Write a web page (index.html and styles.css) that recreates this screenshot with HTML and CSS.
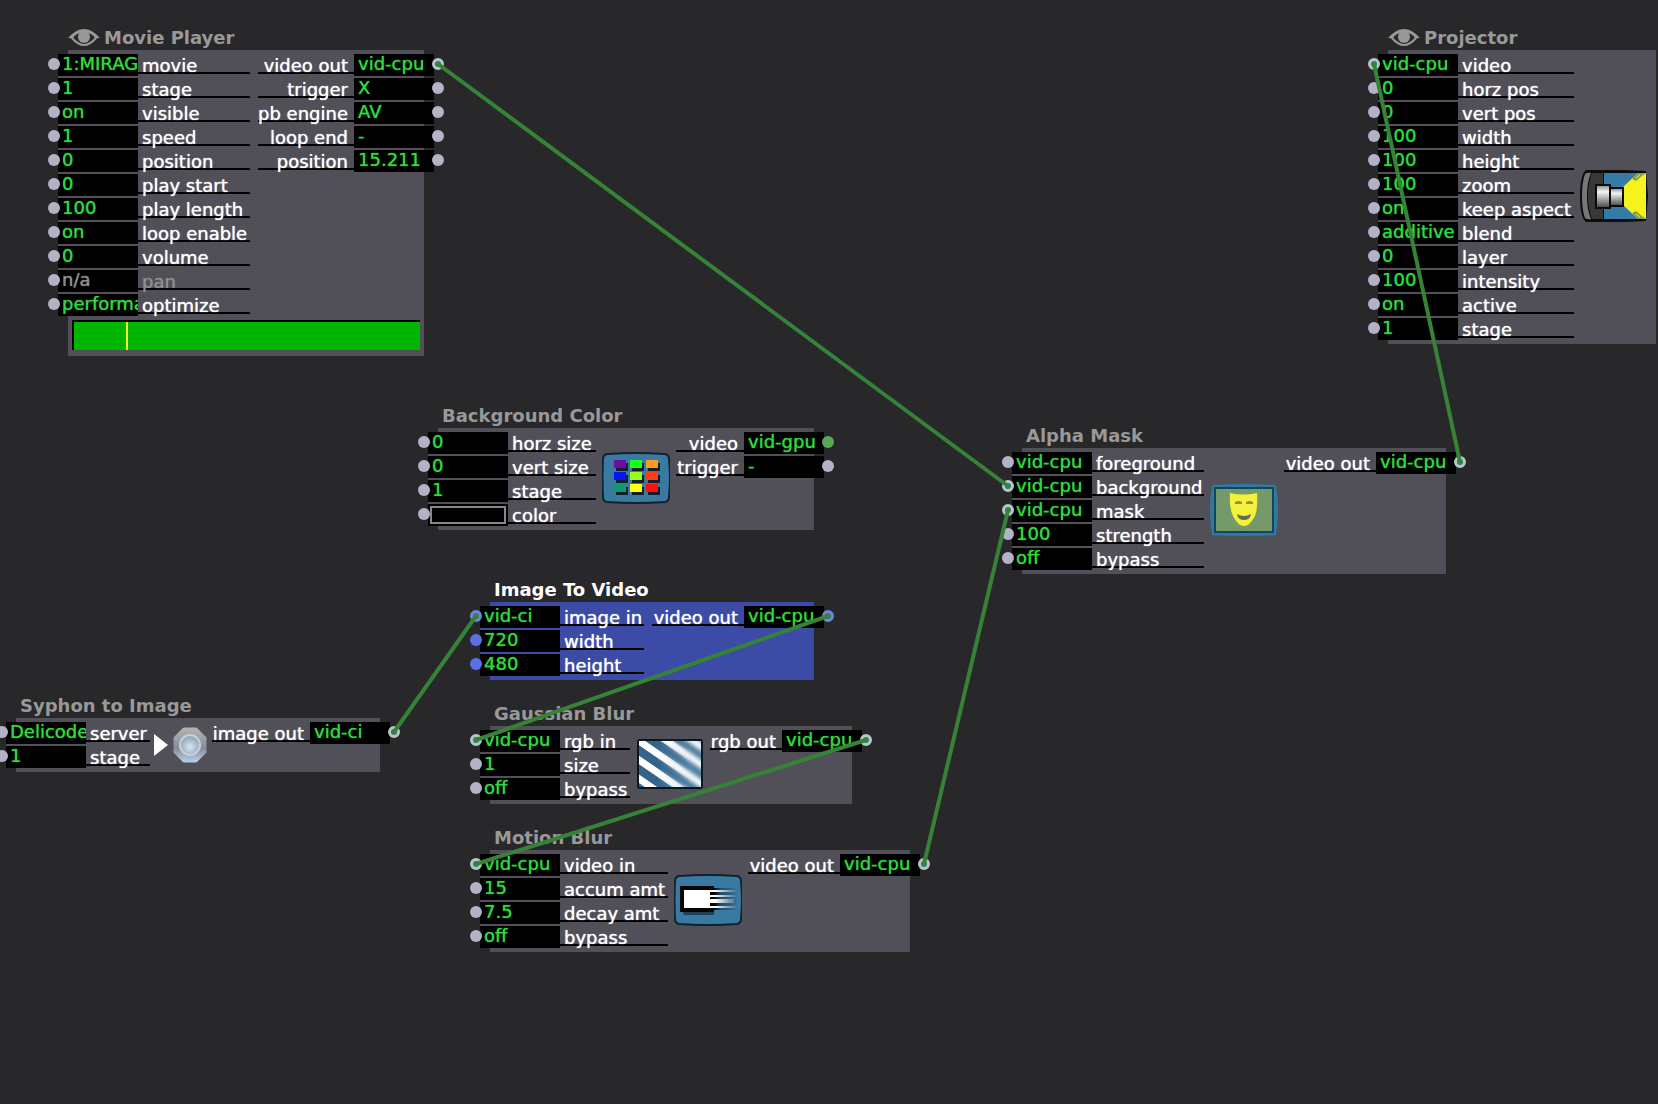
FILE: index.html
```html
<!DOCTYPE html>
<html lang="en">
<head>
<meta charset="utf-8">
<title>Scene Editor</title>
<meta name="viewport" content="width=device-width, initial-scale=1">
<link rel="stylesheet" href="styles.css">
</head>
<body>
<main class="canvas">

  <section class="node movie-player">
    <h2 class="title"><svg class="eye" viewBox="0 0 32 20" aria-hidden="true"><path d="M2 10Q16-3 30 10M4 10Q16 24 28 10" fill="none" stroke="currentColor" stroke-width="2"/><path d="M0 10Q8 1 16 1Q24 1 32 10L27 10Q24 5 20 4L12 4Q8 5 5 10Z" fill="currentColor"/><circle cx="16" cy="9" r="6" fill="currentColor"/></svg>Movie Player</h2>
    <div class="body">
      <div class="ports">
        <div class="inputs">
          <label class="port"><i class="dot"></i><input value="1:MIRAGE"><span class="name">movie</span></label>
          <label class="port"><i class="dot"></i><input value="1"><span class="name">stage</span></label>
          <label class="port"><i class="dot"></i><input value="on"><span class="name">visible</span></label>
          <label class="port"><i class="dot"></i><input value="1"><span class="name">speed</span></label>
          <label class="port"><i class="dot"></i><input value="0"><span class="name">position</span></label>
          <label class="port"><i class="dot"></i><input value="0"><span class="name">play start</span></label>
          <label class="port"><i class="dot"></i><input value="100"><span class="name">play length</span></label>
          <label class="port"><i class="dot"></i><input value="on"><span class="name">loop enable</span></label>
          <label class="port"><i class="dot"></i><input value="0"><span class="name">volume</span></label>
          <label class="port off"><i class="dot"></i><input value="n/a" disabled><span class="name">pan</span></label>
          <label class="port"><i class="dot"></i><input value="performance"><span class="name">optimize</span></label>
        </div>
        <div class="outputs">
          <div class="port"><span class="name">video out</span><output>vid-cpu</output><i class="dot linked"></i></div>
          <div class="port"><span class="name">trigger</span><output>X</output><i class="dot"></i></div>
          <div class="port"><span class="name">pb engine</span><output>AV</output><i class="dot"></i></div>
          <div class="port"><span class="name">loop end</span><output>-</output><i class="dot"></i></div>
          <div class="port"><span class="name">position</span><output>15.211</output><i class="dot"></i></div>
        </div>
      </div>
      <div class="timeline"><div class="playhead" style="width: 15.5%"></div></div>
    </div>
  </section>

  <section class="node projector">
    <h2 class="title"><svg class="eye" viewBox="0 0 32 20" aria-hidden="true"><path d="M2 10Q16-3 30 10M4 10Q16 24 28 10" fill="none" stroke="currentColor" stroke-width="2"/><path d="M0 10Q8 1 16 1Q24 1 32 10L27 10Q24 5 20 4L12 4Q8 5 5 10Z" fill="currentColor"/><circle cx="16" cy="9" r="6" fill="currentColor"/></svg>Projector</h2>
    <div class="body">
      <div class="ports">
        <div class="inputs">
          <label class="port"><i class="dot linked"></i><input value="vid-cpu"><span class="name">video</span></label>
          <label class="port"><i class="dot"></i><input value="0"><span class="name">horz pos</span></label>
          <label class="port"><i class="dot"></i><input value="0"><span class="name">vert pos</span></label>
          <label class="port"><i class="dot"></i><input value="100"><span class="name">width</span></label>
          <label class="port"><i class="dot"></i><input value="100"><span class="name">height</span></label>
          <label class="port"><i class="dot"></i><input value="100"><span class="name">zoom</span></label>
          <label class="port"><i class="dot"></i><input value="on"><span class="name">keep aspect</span></label>
          <label class="port"><i class="dot"></i><input value="additive"><span class="name">blend</span></label>
          <label class="port"><i class="dot"></i><input value="0"><span class="name">layer</span></label>
          <label class="port"><i class="dot"></i><input value="100"><span class="name">intensity</span></label>
          <label class="port"><i class="dot"></i><input value="on"><span class="name">active</span></label>
          <label class="port"><i class="dot"></i><input value="1"><span class="name">stage</span></label>
        </div>
        <svg class="icon" viewBox="0 0 68 52" aria-hidden="true">
          <defs><linearGradient id="metal" x1="0" y1="0" x2="0" y2="1"><stop offset="0" stop-color="#888"/><stop offset=".3" stop-color="#f4f4f4"/><stop offset="1" stop-color="#444"/></linearGradient></defs>
          <path d="M6 0Q34-1 66 1L68 26L66 51Q34 53 6 52Q0 47 0 26Q0 5 6 0Z" fill="#0c0c0c"/>
          <path d="M24 3H65V49H24Z" fill="#357ba8"/>
          <path d="M43 17L58 3H66V49H58L43 35Z" fill="#f6f21e"/>
          <path d="M52 9L58 3H66L56 11ZM52 43L58 49H66L56 41Z" fill="#8d9c50"/>
          <path d="M56 8L60 5M59 9L64 5M56 44L60 47M59 43L64 47" stroke="#f6f21e" stroke-width="1"/>
          <path d="M5 4Q8 2 11 3Q7 12 7 26Q7 40 11 49Q8 50 5 48Q2 40 2 26Q2 12 5 4Z" fill="#777"/>
          <path d="M12 3H23V14H16V38H23V49H12Q8 40 8 26Q8 12 12 3Z" fill="#383838"/>
          <path d="M16 15H30V38H16Z" fill="url(#metal)" stroke="#0c0c0c" stroke-width="2"/>
          <path d="M30 18H43V36H30Z" fill="url(#metal)" stroke="#0c0c0c" stroke-width="2"/>
        </svg>
      </div>
    </div>
  </section>

  <section class="node background-color">
    <h2 class="title">Background Color</h2>
    <div class="body">
      <div class="ports">
        <div class="inputs">
          <label class="port"><i class="dot"></i><input value="0"><span class="name">horz size</span></label>
          <label class="port"><i class="dot"></i><input value="0"><span class="name">vert size</span></label>
          <label class="port"><i class="dot"></i><input value="1"><span class="name">stage</span></label>
          <label class="port"><i class="dot"></i><input type="color" value="#000000"><span class="name">color</span></label>
        </div>
        <svg class="icon" viewBox="0 0 68 52" aria-hidden="true">
          <path d="M5 2Q34 0 63 2Q67 3 67 7Q69 26 67 45Q67 49 63 50Q34 52 5 50Q1 49 1 45Q0 26 1 7Q1 3 5 2Z" fill="#3a7aa2" stroke="#12222e" stroke-width="2"/>
          <path d="M14 11h12v8H14zM30 11h12v8H30zM46 11h12v8H46zM14 23h12v8H14zM30 23h12v8H30zM46 23h12v8H46zM14 35h12v8H14zM30 35h12v8H30zM46 35h12v8H46z" fill="#10202c"/>
          <path d="M12 8h12v8H12z" fill="#6a0fa0"/><path d="M28 8h12v8H28z" fill="#1cff1c"/><path d="M44 8h12v8H44z" fill="#ff9a1c"/>
          <path d="M12 20h12v8H12z" fill="#0a14f0"/><path d="M28 20h12v8H28z" fill="#96ff1e"/><path d="M44 20h12v8H44z" fill="#ff3c1c"/>
          <path d="M12 32h12v8H12z" fill="#109a70"/><path d="M28 32h12v8H28z" fill="#ffff10"/><path d="M44 32h12v8H44z" fill="#ff1010"/>
        </svg>
        <div class="outputs">
          <div class="port"><span class="name">video</span><output>vid-gpu</output><i class="dot gpu"></i></div>
          <div class="port"><span class="name">trigger</span><output>-</output><i class="dot"></i></div>
        </div>
      </div>
    </div>
  </section>

  <section class="node alpha-mask">
    <h2 class="title">Alpha Mask</h2>
    <div class="body">
      <div class="ports">
        <div class="inputs">
          <label class="port"><i class="dot"></i><input value="vid-cpu"><span class="name">foreground</span></label>
          <label class="port"><i class="dot linked"></i><input value="vid-cpu"><span class="name">background</span></label>
          <label class="port"><i class="dot linked"></i><input value="vid-cpu"><span class="name">mask</span></label>
          <label class="port"><i class="dot"></i><input value="100"><span class="name">strength</span></label>
          <label class="port"><i class="dot"></i><input value="off"><span class="name">bypass</span></label>
        </div>
        <svg class="icon" viewBox="0 0 68 52" aria-hidden="true">
          <path d="M2 1Q34-1 66 1Q70 26 66 51Q34 53 2 51Q-2 26 2 1Z" fill="#33789f"/>
          <path d="M5 4H63V48H5Z" fill="#739a68" stroke="#12455f" stroke-width="2"/>
          <path d="M20 9Q33 12 47 9Q48 25 45 32Q40 42 34 42Q28 42 23 32Q19 24 20 9Z" fill="#f5f03a"/>
          <path d="M25 18Q28 16 32 18V20H25ZM36 18Q40 16 43 18V20H36Z" fill="#8a9440"/>
          <path d="M27 30Q34 34 41 30Q40 36 34 36Q28 36 27 30Z" fill="#5f6b52"/>
        </svg>
        <div class="outputs">
          <div class="port"><span class="name">video out</span><output>vid-cpu</output><i class="dot linked"></i></div>
        </div>
      </div>
    </div>
  </section>

  <section class="node image-to-video selected">
    <h2 class="title">Image To Video</h2>
    <div class="body">
      <div class="ports">
        <div class="inputs">
          <label class="port"><i class="dot linked"></i><input value="vid-ci"><span class="name">image in</span></label>
          <label class="port"><i class="dot"></i><input value="720"><span class="name">width</span></label>
          <label class="port"><i class="dot"></i><input value="480"><span class="name">height</span></label>
        </div>
        <div class="outputs">
          <div class="port"><span class="name">video out</span><output>vid-cpu</output><i class="dot linked"></i></div>
        </div>
      </div>
    </div>
  </section>

  <section class="node syphon">
    <h2 class="title">Syphon to Image</h2>
    <div class="body">
      <div class="ports">
        <div class="inputs">
          <label class="port"><i class="dot"></i><input value="Delicode"><span class="name">server</span></label>
          <label class="port"><i class="dot"></i><input value="1"><span class="name">stage</span></label>
        </div>
        <svg class="icon" viewBox="0 0 62 46" aria-hidden="true">
          <defs><linearGradient id="ring" x1="0" y1="0" x2="0" y2="1"><stop offset="0" stop-color="#b4b2b0"/><stop offset=".6" stop-color="#858c96"/><stop offset="1" stop-color="#b4cbe2"/></linearGradient><radialGradient id="lens" cx=".5" cy=".6" r=".6"><stop offset="0" stop-color="#d8e6f4"/><stop offset="1" stop-color="#8da3b8"/></radialGradient></defs>
          <path d="M4 12L18 23L4 34Z" fill="#fff"/>
          <path d="M34 7H46L55 16V30L46 39H34L25 30V16Z" fill="url(#ring)" stroke="url(#ring)" stroke-width="3" stroke-linejoin="round"/>
          <circle cx="40" cy="23" r="11" fill="#c9ced4"/>
          <circle cx="40" cy="23" r="9" fill="url(#lens)"/>
        </svg>
        <div class="outputs">
          <div class="port"><span class="name">image out</span><output>vid-ci</output><i class="dot linked"></i></div>
        </div>
      </div>
    </div>
  </section>

  <section class="node gaussian-blur">
    <h2 class="title">Gaussian Blur</h2>
    <div class="body">
      <div class="ports">
        <div class="inputs">
          <label class="port"><i class="dot linked"></i><input value="vid-cpu"><span class="name">rgb in</span></label>
          <label class="port"><i class="dot"></i><input value="1"><span class="name">size</span></label>
          <label class="port"><i class="dot"></i><input value="off"><span class="name">bypass</span></label>
        </div>
        <svg class="icon" viewBox="0 0 68 52" aria-hidden="true">
          <defs>
            <clipPath id="pane"><rect x="3" y="3" width="62" height="46"/></clipPath>
            <filter id="soft"><feGaussianBlur stdDeviation="2"/></filter>
            <linearGradient id="fade"><stop offset=".3" stop-color="#fff" stop-opacity="0"/><stop offset=".8" stop-color="#fff"/></linearGradient>
            <mask id="right"><rect width="68" height="52" fill="url(#fade)"/></mask>
          </defs>
          <rect x="1" y="1" width="66" height="50" rx="3" fill="#0c1820"/>
          <g clip-path="url(#pane)">
            <rect x="3" y="3" width="62" height="46" fill="#33648a"/>
            <path id="stripes" d="M-10 32L40 66M-10 13L60 61M-10-6L70 49M12-10L82 38M38-10L94 28" stroke="#fff" stroke-width="7"/>
            <g mask="url(#right)"><rect x="3" y="3" width="62" height="46" fill="#4d7da0"/><use href="#stripes" filter="url(#soft)"/></g>
          </g>
        </svg>
        <div class="outputs">
          <div class="port"><span class="name">rgb out</span><output>vid-cpu</output><i class="dot linked"></i></div>
        </div>
      </div>
    </div>
  </section>

  <section class="node motion-blur">
    <h2 class="title">Motion Blur</h2>
    <div class="body">
      <div class="ports">
        <div class="inputs">
          <label class="port"><i class="dot linked"></i><input value="vid-cpu"><span class="name">video in</span></label>
          <label class="port"><i class="dot"></i><input value="15"><span class="name">accum amt</span></label>
          <label class="port"><i class="dot"></i><input value="7.5"><span class="name">decay amt</span></label>
          <label class="port"><i class="dot"></i><input value="off"><span class="name">bypass</span></label>
        </div>
        <svg class="icon" viewBox="0 0 68 52" aria-hidden="true">
          <defs><linearGradient id="trail" gradientUnits="userSpaceOnUse" x1="36" x2="64" y1="0" y2="0"><stop offset=".2" stop-color="#fff"/><stop offset="1" stop-color="#fff" stop-opacity="0"/></linearGradient><linearGradient id="shade"><stop offset="0" stop-color="#000"/><stop offset=".3" stop-color="#123" stop-opacity=".5"/><stop offset="1" stop-color="#000" stop-opacity="0"/></linearGradient></defs>
          <path d="M5 2Q34 0 63 2Q67 3 67 7Q69 26 67 45Q67 49 63 50Q34 52 5 50Q1 49 1 45Q0 26 1 7Q1 3 5 2Z" fill="#3a7aa2" stroke="#12222e" stroke-width="2"/>
          <path d="M8 36H40V41H10Z" fill="#1d4258"/>
          <path d="M6 12H40V38H6Z" fill="#060604"/>
          <path d="M40 14H64V36H40Z" fill="url(#shade)"/>
          <path d="M10 16H36V34H10Z" fill="#fff"/>
          <path d="M36 16H64V18H36ZM36 21H64V23H36ZM36 25H60V29H36ZM36 32H64V34H36Z" fill="url(#trail)"/>
        </svg>
        <div class="outputs">
          <div class="port"><span class="name">video out</span><output>vid-cpu</output><i class="dot linked"></i></div>
        </div>
      </div>
    </div>
  </section>

  <svg class="wires" aria-hidden="true">
    <path d="M438 64L1008 486"/>
    <path d="M1460 462L1374 64"/>
    <path d="M924 864L1008 510"/>
    <path d="M394 732L476 616"/>
    <path d="M828 616L476 740"/>
    <path d="M866 740L476 864"/>
  </svg>
</main>
</body>
</html>
```
FILE: styles.css
```css
* {
  box-sizing: border-box;
}

body {
  margin: 0;
  background: #28282a;
  color: #fff;
  font: 18px/24px "DejaVu Sans", Verdana, sans-serif;
}

.canvas {
  position: relative;
  min-height: 100vh;
  overflow: hidden;
}

/* Nodes sit freely on the canvas */
.node {
  position: absolute;
  --fill: #515059;
  --dot: #b4b2c6;
  --ring: #b4c8c8;
}

.movie-player { left: 68px; top: 26px; --in: 112px; --out: 96px; }
.projector { left: 1388px; top: 26px; --in: 116px; }
.background-color { left: 438px; top: 404px; --in: 88px; --out: 68px; }
.alpha-mask { left: 1022px; top: 424px; --in: 112px; --out: 92px; }
.image-to-video { left: 490px; top: 578px; --in: 84px; --out: 92px; }
.syphon { left: 16px; top: 694px; --in: 64px; --out: 98px; }
.gaussian-blur { left: 490px; top: 702px; --in: 70px; --out: 72px; }
.motion-blur { left: 490px; top: 826px; --in: 108px; --out: 92px; }

.title {
  display: flex;
  align-items: center;
  gap: 4px;
  margin: 0;
  padding-left: 4px;
  color: #999;
  font-size: 18px;
  line-height: 24px;
  white-space: nowrap;
}

.eye {
  width: 32px;
  height: 20px;
  margin-left: -4px;
}

.body {
  padding: 4px 0;
  background: var(--fill);
}

.selected {
  --fill: #3b4ba6;
  --dot: #5c70e4;
  --ring: #6c88d8;
}

.selected .title { color: #fff; }

.ports {
  display: flex;
}

.inputs,
.outputs {
  display: flex;
  flex-direction: column;
  gap: 2px;
}

.inputs { margin-left: -20px; }
.outputs { margin-right: -20px; }

.movie-player .ports,
.image-to-video .ports { gap: 8px; }

.port {
  display: flex;
  height: 22px;
}

.dot {
  position: relative;
  flex: none;
  width: 12px;
  height: 12px;
  margin-top: 4px;
  border-radius: 50%;
  background: var(--dot);
}

.inputs .dot { margin-right: -2px; }
.outputs .dot { margin-left: -2px; }

.dot.linked {
  border: 3px solid var(--ring);
  background: #3f7a5c;
}

.dot.gpu { background: #57a957; }

input,
output {
  flex: none;
  width: 80px;
  height: 22px;
  margin: 0;
  padding: 0 0 2px 4px;
  border: 0;
  border-radius: 0;
  background: #000;
  color: #2bdc3a;
  font: inherit;
  line-height: 20px;
  text-shadow: 0 0 1px currentColor;
  overflow: hidden;
}

input { padding-bottom: 4px; }

/* Divider between value boxes, also where they stick out of the body */
.inputs .port:not(:last-child) input {
  box-shadow: 0 2px 0 var(--fill);
}

input:focus { outline: none; }

input[type="color"] {
  appearance: none;
  padding: 2px;
}

input[type="color"]::-webkit-color-swatch-wrapper { padding: 0; }

input[type="color"]::-webkit-color-swatch {
  border: 2px solid #888;
  border-radius: 0;
}

.name {
  height: 20px;
  border-bottom: 2px solid #000;
  text-shadow: 0 0 1px currentColor;
  white-space: nowrap;
}

.inputs .name {
  width: var(--in);
  padding-left: 4px;
}

.outputs .name {
  width: var(--out);
  padding-right: 6px;
  text-align: right;
}

.off input,
.off .name { color: #8f8f8f; }

.icon {
  flex: none;
  align-self: center;
  width: 68px;
  height: 52px;
  margin: 0 6px 2px;
}

.projector .icon { margin-right: 8px; }

.syphon .icon {
  width: 62px;
  height: 46px;
  margin: 0;
}

.timeline {
  height: 30px;
  margin: 4px 4px 2px;
  border: solid #000;
  border-width: 2px 0 0 2px;
  background: #00b400;
}

.playhead {
  height: 100%;
  border-right: 2px solid #f5f51e;
}

.wires {
  position: absolute;
  inset: 0;
  width: 100%;
  height: 100%;
  fill: none;
  stroke: #368236;
  stroke-width: 4;
  pointer-events: none;
}
```
